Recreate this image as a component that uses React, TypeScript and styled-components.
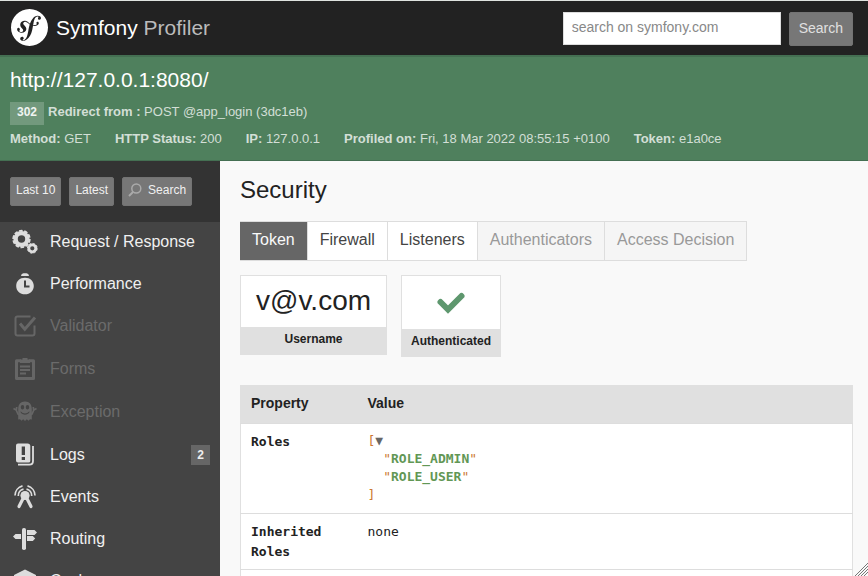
import React from 'react';
import styled, { createGlobalStyle } from 'styled-components';
import { SiSymfony } from 'react-icons/si';

const GlobalStyle = createGlobalStyle`
  * { box-sizing: border-box; }
  html, body { margin: 0; padding: 0; }
  body {
    background: #f9f9f9;
    color: #222;
    font: 14px/20px "Liberation Sans", Helvetica, Arial, sans-serif;
  }
  button, input { font-family: inherit; margin: 0; }
`;

const Page = styled.div`
  display: flex;
  flex-direction: column;
  height: 100vh;
  overflow: hidden;
`;

const Header = styled.header`
  flex: none;
  display: flex;
  align-items: flex-start;
  justify-content: space-between;
  height: 55px;
  padding: 8px 15px 0 11px;
  background: #222;
  border-top: 1px solid #dfe3e0;
`;

const Brand = styled.h1`
  display: flex;
  align-items: center;
  gap: 8px;
  margin: 0;
  color: #fff;
  font-size: 21px;
  font-weight: 400;
  line-height: 24px;
  span { color: #bbb; }
  svg { display: block; }
`;

const SearchForm = styled.form`
  display: flex;
  gap: 8px;
  align-items: flex-start;
  padding-top: 3px;
`;

const SearchInput = styled.input`
  width: 218px;
  height: 33px;
  padding: 0 8px 3px;
  border: 1px solid #ddd;
  border-radius: 0;
  background: #fff;
  font-size: 14px;
  &::placeholder { color: #888; opacity: 1; }
`;

const Button = styled.button<{ $small?: boolean }>`
  display: flex;
  align-items: center;
  gap: 6px;
  height: ${p => (p.$small ? 29 : 34)}px;
  padding: ${p => (p.$small ? '0 5px 3px' : '0 9px 3px')};
  border: 1px solid #737373;
  border-radius: 2px;
  background: #777;
  color: ${p => (p.$small ? '#f0f0f0' : '#e0e0e0')};
  font-size: ${p => (p.$small ? 12 : 14)}px;
  line-height: 20px;
`;

const Summary = styled.section`
  flex: none;
  padding: 11px 10px 11px;
  background: #4f805d;
  border: solid #446f52;
  border-width: 2px 0 1px;
  color: rgba(255, 255, 255, 0.75);
  font-size: 13px;
`;

const Url = styled.h2`
  margin: 0 0 10px;
  font-size: 21px;
  font-weight: 400;
  line-height: 24px;
  a { color: #fff; text-decoration: none; }
`;

const Redirect = styled.div`
  display: flex;
  align-items: flex-start;
  gap: 4px;
  margin-bottom: 4px;
  line-height: 19px;
`;

const Status = styled.span`
  height: 23px;
  padding: 0 7px;
  background: rgba(255, 255, 255, 0.2);
  color: #f0f4f1;
  font-size: 12px;
  font-weight: 700;
  line-height: 21px;
`;

const Metadata = styled.dl`
  display: flex;
  gap: 24px;
  margin: 0;
  dt { display: inline; font-weight: 700; }
  dd { display: inline; margin: 0; }
`;

const Body = styled.div`
  flex: 1;
  display: flex;
  min-height: 0;
`;

const Sidebar = styled.aside`
  flex: none;
  width: 220px;
  overflow: hidden;
  background: #444;
`;

const Shortcuts = styled.div`
  display: flex;
  align-items: flex-start;
  gap: 8px;
  height: 61px;
  padding: 16px 10px;
  background: #333;
`;

const Menu = styled.ul`
  margin: 0;
  padding: 0;
  list-style: none;
`;

const MenuLink = styled.a<{ $muted?: boolean }>`
  display: grid;
  grid-template-columns: 26px 1fr auto;
  column-gap: 12px;
  align-items: center;
  height: 42px;
  margin-bottom: ${p => (p.$muted ? 1 : 0)}px;
  padding: 0 10px 2px 12px;
  color: ${p => (p.$muted ? '#6b6b6b' : '#f0f0f0')};
  font-size: 16px;
  text-decoration: none;
  svg { display: block; color: ${p => (p.$muted ? '#666' : '#ddd')}; }
`;

const Count = styled.span`
  width: 19px;
  height: 20px;
  background: #666;
  color: #eee;
  font-size: 12px;
  font-weight: 700;
  line-height: 20px;
  text-align: center;
`;

const Main = styled.main`
  flex: 1;
  min-width: 0;
  padding: 15px 15px 0 20px;
  overflow: hidden;
`;

const Title = styled.h2`
  margin: 0 0 17px;
  font-size: 24px;
  font-weight: 400;
  line-height: 28px;
`;

const Tabs = styled.div`
  display: inline-flex;
  border: solid #ddd;
  border-width: 1px 1px 1px 0;
`;

const Tab = styled.button<{ $active?: boolean }>`
  height: 38px;
  padding: 0 12px 3px;
  border: 0;
  border-left: 1px solid #ddd;
  background: ${p => (p.$active ? '#666' : '#fff')};
  color: ${p => (p.$active ? '#fafafa' : '#444')};
  font-size: 16px;
  line-height: 20px;
  &:first-child { border-left: 0; }
  &:disabled { background: #f5f5f5; color: #999; }
`;

const Metrics = styled.div`
  display: flex;
  align-items: flex-start;
  gap: 14px;
  margin: 14px 0 28px;
`;

const Metric = styled.div`
  border: 1px solid #e0e0e0;
  background: #fff;
  text-align: center;
`;

const MetricValue = styled.div<{ $icon?: boolean }>`
  display: flex;
  align-items: center;
  justify-content: center;
  height: ${p => (p.$icon ? 53 : 51)}px;
  padding: 0 15px 2px;
  font-size: 28px;
  line-height: 32px;
`;

const MetricLabel = styled.div`
  height: 27px;
  padding: 0 9px;
  background: #e0e0e0;
  font-size: 12px;
  font-weight: 700;
  line-height: 24px;
`;

const Table = styled.table`
  width: 100%;
  border-collapse: collapse;
  border: 1px solid #e0e0e0;
  background: #fff;
  th, td {
    padding: 8px 10px 7px;
    border-bottom: 1px solid #ddd;
    text-align: left;
    vertical-align: top;
  }
  thead th { padding: 7px 10px 10px; background: #e0e0e0; }
  tbody th, tbody td { font: 13px/20px "DejaVu Sans Mono", monospace; }
  tbody th { font-weight: 700; }
`;

const PropertyHead = styled.th`
  width: 117px;
`;

const Dump = styled.pre`
  margin: 0 0 2px;
  color: #cc7832;
  font: 13px/18px "DejaVu Sans Mono", monospace;
  b { color: #629755; }
`;

const Toggle = styled.span`
  color: #666;
`;

const Grip = styled.svg`
  position: fixed;
  right: 0;
  bottom: 0;
`;

const Icon = ({ children }: { children: React.ReactNode }) => (
  <svg width="26" height="26" viewBox="0 0 26 26" fill="currentColor" aria-hidden="true">{children}</svg>
);

const icons = {
  gears: (
    <Icon>
      <circle cx="9.5" cy="10" r="5.9" fill="none" stroke="currentColor" strokeWidth="4.4" />
      <circle cx="9.5" cy="10" r="8.3" fill="none" stroke="currentColor" strokeWidth="1.8" strokeDasharray="3.6 1.6" />
      <circle cx="20.3" cy="19.3" r="3.5" fill="none" stroke="currentColor" strokeWidth="2.8" />
      <circle cx="20.3" cy="19.3" r="4.9" fill="none" stroke="currentColor" strokeWidth="1" strokeDasharray="2.4 1.4" />
    </Icon>
  ),
  timer: (
    <Icon>
      <path d="M9 5C9.3 2.700 10.8 2.300 13 2.300s3.700.4 4 2.700z" />
      <path fillRule="evenodd" d="M13 6.800c5.200 0 8.800 3.400 8.800 8.200S18 23.300 13 23.300 4.200 20 4.200 15 7.800 6.800 13 6.800zM12 9.500v7h5.500v-2h-3.500v-5z" />
    </Icon>
  ),
  check: (
    <Icon>
      <path d="M18.500 3.500H5.500q-2 0-2 2v15q0 2 2 2h15q2 0 2-2v-8" fill="none" stroke="currentColor" strokeWidth="2" />
      <path d="M8 10.500l4.800 5.800L23 4.500" fill="none" stroke="currentColor" strokeWidth="3" />
    </Icon>
  ),
  clipboard: (
    <Icon>
      <path d="M9 4.800H4.500v17.700h17V4.800H17" fill="none" stroke="currentColor" strokeWidth="3" strokeLinejoin="round" />
      <path d="M8 7V3.500h2.500V2h5v1.500H18V7z" />
      <path d="M8 10.500h10M8 14h10M8 17.500h6" stroke="currentColor" strokeWidth="1.800" />
    </Icon>
  ),
  ghost: (
    <Icon>
      <path d="M1.500 9.500l2.700 1.500 1.800 4 2.500 1M24.500 9.500l-2.700 1.500-1.800 4-2.500 1M4.300 11.500l.4-3.500M21.700 11.500l-.4-3.500" fill="none" stroke="currentColor" strokeWidth="1.700" />
      <path fillRule="evenodd" d="M13 2.500c4.600 0 6.800 3 6.800 7.500v10.500l-1.800-.3-1.500 1.600-1.700-1.500-1.800 1.600-1.800-1.600-1.700 1.500L8 20.200l-1.800.3V10c0-4.500 2.200-7.500 6.800-7.500zM10.500 6c-1.100 0-1.700.900-1.700 2.200s.600 2.200 1.700 2.200 1.700-.900 1.700-2.200S11.600 6 10.500 6zM15.500 6c-1.100 0-1.700.900-1.700 2.200s.600 2.200 1.700 2.200 1.700-.900 1.700-2.200S16.600 6 15.500 6zM8.500 12.300q4.500 4.500 9 0l-.4 1.800q-4.100 3.400-8.200 0z" />
    </Icon>
  ),
  log: (
    <Icon>
      <path fillRule="evenodd" d="M6 1.500h9.500q2.800 0 2.800 2.500v15q0 1.500-1.800 1.500H6Q4 20.500 4 18.500v-15q0-2 2-2zM9.700 4.500v8.500h3.300V4.500zM9.700 15v3h3.300v-3z" />
      <path d="M21 4V19q0 3.700-3.500 3.700H6" fill="none" stroke="currentColor" strokeWidth="1.800" />
    </Icon>
  ),
  antenna: (
    <Icon>
      <circle cx="13" cy="11.500" r="4.600" />
      <path d="M7 22.500L11.800 13h2.400L19 22.500" fill="none" stroke="currentColor" strokeWidth="3.200" strokeLinecap="round" strokeLinejoin="round" />
      <path d="M6.300 12A6.700 6.700 0 0 1 11.500 5.100M19.700 12A6.700 6.700 0 0 0 14.500 5.100M3 11.500A10 10 0 0 1 10.500 1.900M23 11.500A10 10 0 0 0 15.500 1.900" fill="none" stroke="currentColor" strokeWidth="1.700" />
    </Icon>
  ),
  signpost: (
    <Icon>
      <rect x="10" y="2" width="4" height="22" rx="1.800" />
      <path d="M15 4h7.500l2.500 2.500-2.500 2.500H15zM15 10h5.800l2.400 2.500-2.400 2.500H15zM9 8H3.500L1 10.500 3.500 13H9z" />
    </Icon>
  ),
  layers: (
    <Icon>
      <path d="M13 1.500L24 7v12l-11 5.500L2 19V7z" />
    </Icon>
  ),
};

interface Item { label: string; icon: React.ReactNode; muted?: boolean; count?: number }

const items: Item[] = [
  { label: 'Request / Response', icon: icons.gears },
  { label: 'Performance', icon: icons.timer },
  { label: 'Validator', icon: icons.check, muted: true },
  { label: 'Forms', icon: icons.clipboard, muted: true },
  { label: 'Exception', icon: icons.ghost, muted: true },
  { label: 'Logs', icon: icons.log, count: 2 },
  { label: 'Events', icon: icons.antenna },
  { label: 'Routing', icon: icons.signpost },
  { label: 'Cache', icon: icons.layers },
];

const metadata = [
  ['Method:', 'GET'],
  ['HTTP Status:', '200'],
  ['IP:', '127.0.0.1'],
  ['Profiled on:', 'Fri, 18 Mar 2022 08:55:15 +0100'],
  ['Token:', 'e1a0ce'],
];

export default function App() {
  return (
    <Page>
      <GlobalStyle />
      <Header>
        <Brand>
          <SiSymfony size={37} aria-hidden="true" />
          <div>Symfony <span>Profiler</span></div>
        </Brand>
        <SearchForm onSubmit={e => e.preventDefault()}>
          <SearchInput type="search" aria-label="search on symfony.com" placeholder="search on symfony.com" />
          <Button type="submit">Search</Button>
        </SearchForm>
      </Header>
      <Summary>
        <Url><a href="#url">http://127.0.0.1:8080/</a></Url>
        <Redirect>
          <Status>302</Status>
          <div><strong>Redirect from :</strong> POST @app_login (3dc1eb)</div>
        </Redirect>
        <Metadata>
          {metadata.map(([name, value]) => (
            <div key={name}><dt>{name}</dt> <dd>{value}</dd></div>
          ))}
        </Metadata>
      </Summary>
      <Body>
        <Sidebar>
          <Shortcuts>
            <Button $small type="button">Last 10</Button>
            <Button $small type="button">Latest</Button>
            <Button $small type="button">
              <svg width="14" height="14" viewBox="0 0 14 14" fill="none" stroke="#aaa" aria-hidden="true">
                <circle cx="8.300" cy="5.500" r="4.500" strokeWidth="1.500" />
                <path d="M5 9L1 13" strokeWidth="2" />
              </svg>
              Search
            </Button>
          </Shortcuts>
          <nav>
            <Menu>
              {items.map(item => (
                <li key={item.label}>
                  <MenuLink href="#panel" $muted={item.muted}>
                    {item.icon}
                    <span>{item.label}</span>
                    {item.count && <Count>{item.count}</Count>}
                  </MenuLink>
                </li>
              ))}
            </Menu>
          </nav>
        </Sidebar>
        <Main>
          <Title>Security</Title>
          <Tabs role="tablist">
            <Tab role="tab" aria-selected="true" $active>Token</Tab>
            <Tab role="tab">Firewall</Tab>
            <Tab role="tab">Listeners</Tab>
            <Tab role="tab" disabled>Authenticators</Tab>
            <Tab role="tab" disabled>Access Decision</Tab>
          </Tabs>
          <Metrics>
            <Metric>
              <MetricValue>v@v.com</MetricValue>
              <MetricLabel>Username</MetricLabel>
            </Metric>
            <Metric>
              <MetricValue $icon>
                <svg width="30" height="24" viewBox="0 0 30 24" role="img" aria-label="Yes">
                  <path d="M4.500 12l7.500 7.500L25.500 6" fill="none" stroke="#5e976e" strokeWidth="6" strokeLinecap="round" />
                </svg>
              </MetricValue>
              <MetricLabel>Authenticated</MetricLabel>
            </Metric>
          </Metrics>
          <Table>
            <thead>
              <tr><PropertyHead scope="col">Property</PropertyHead><th scope="col">Value</th></tr>
            </thead>
            <tbody>
              <tr>
                <th scope="row">Roles</th>
                <td>
                  <Dump>
                    [<Toggle>▼</Toggle>{'\n  "'}<b>ROLE_ADMIN</b>{'"\n  "'}<b>ROLE_USER</b>{'"\n]'}
                  </Dump>
                </td>
              </tr>
              <tr><th scope="row">Inherited Roles</th><td>none</td></tr>
              <tr><td colSpan={2} /></tr>
            </tbody>
          </Table>
        </Main>
      </Body>
      <Grip width="13" height="13" viewBox="0 0 13 13" stroke="#777" aria-hidden="true">
        <path d="M0 13L13 0M3 13L13 3M6 13L13 6M9 13L13 9" />
      </Grip>
    </Page>
  );
}
